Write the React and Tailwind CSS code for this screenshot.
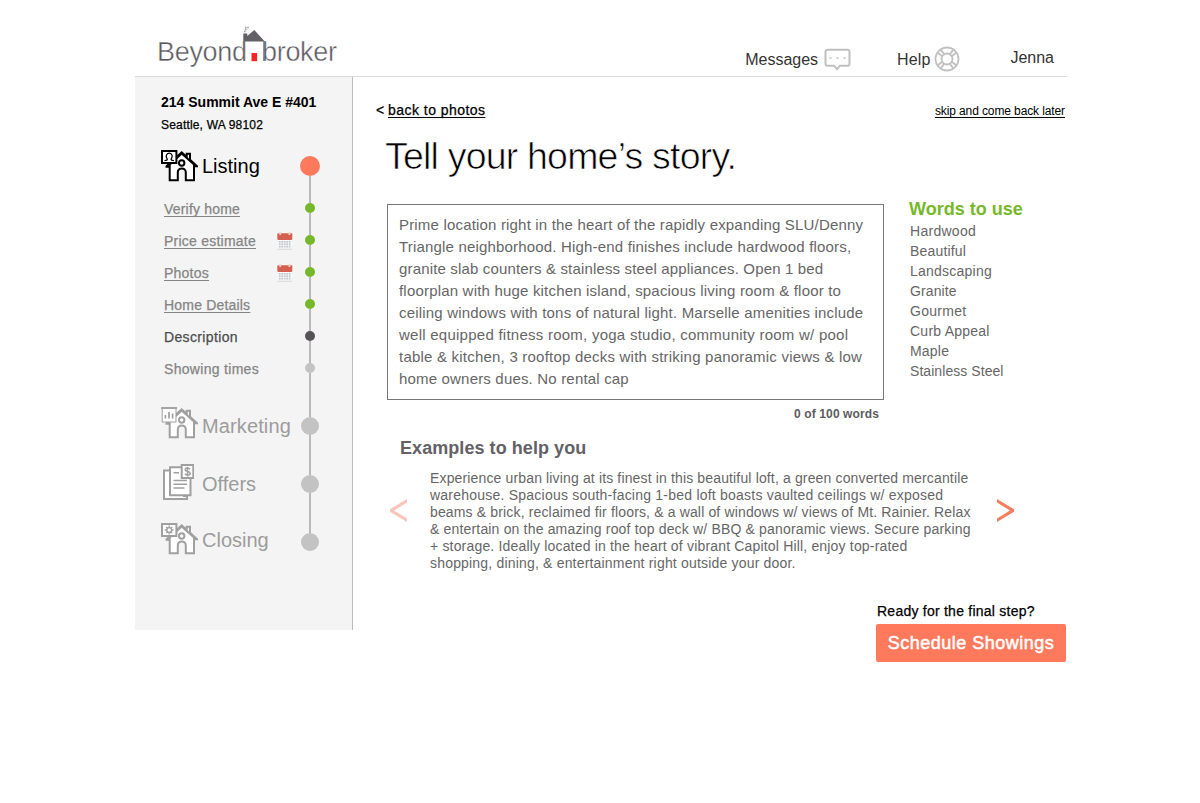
function House({ children, stroke, width }) {
  return (
    <svg width="37" height="32" viewBox="0 0 37 32" fill="none" stroke={stroke} strokeWidth={width} className="shrink-0">
      <path d="M8.700 30.200V14.500L20.700 3.400 33 14.500v15.700h-8.200v-7.800a4 4 0 0 0-8 0v7.800z" fill="#fff" />
      <path d="M4.500 16.700h3.500M5.500 16.300 20.700 2.300l5 4.600V3.800h3.300v6L36 16.300h-3" fill="none" />
      <circle cx="20.700" cy="13" r="2.700" fill="#fff" />
      {children}
    </svg>
  );
}

function ListingIcon() {
  return (
    <House stroke="#000" width="2">
      <rect x="1" y="1" width="14.400" height="12" fill="#fff" />
      <path d="M3.500 10.600c2.600 0 3.200-.8 2.600-1.800C4.500 7 5 3.200 8.200 3.200s3.700 3.800 2.100 5.600c-.6 1 0 1.800 2.600 1.800" strokeWidth="1.300" />
    </House>
  );
}

function MarketingIcon() {
  return (
    <House stroke="#a0a0a0" width="2">
      <rect x="1.200" y="1" width="13.800" height="14" fill="#fff" strokeWidth="1" />
      <path d="M0 1h16" strokeWidth="1.800" />
      <path d="M4.400 11.500V8M8 11.500V5M11.600 11.500V6.500" strokeWidth="1.700" />
    </House>
  );
}

function ClosingIcon() {
  return (
    <House stroke="#a0a0a0" width="2">
      <rect x="1" y="1" width="14.400" height="12" fill="#fff" />
      <circle cx="8.200" cy="7" r="2.400" strokeWidth="1.400" />
      <path d="M8.200 2.600v2M8.200 9.400v2M3.800 7h2M10.600 7h2M5.100 3.900l1.400 1.400M9.900 8.700l1.400 1.400M11.300 3.900 9.900 5.300M6.500 8.700l-1.400 1.400" strokeWidth="1.300" />
    </House>
  );
}

function OffersIcon() {
  return (
    <svg width="33" height="36" viewBox="-2 0 33 36" fill="none" stroke="#a0a0a0" strokeWidth="2" className="shrink-0">
      <path d="M1 6.500h20v25.500h3v3H1z" fill="#fff" />
      <path d="M7 3.200h20.500v28H7z" fill="#fff" />
      <rect x="18.700" y="1" width="11.600" height="13" fill="#fff" />
      <path d="M10.500 8.700h5.500M10.500 16.500h13.500M10.500 20.300h13.500M10.500 24h11" strokeWidth="1.500" />
      <path d="M27 5.300c-.6-1-1.500-1.300-2.500-1.300-1.300 0-2.300.7-2.300 1.700 0 2.500 5 1.200 5 3.700 0 1-1.100 1.700-2.500 1.700-1.200 0-2.200-.5-2.700-1.500M24.500 2.800v9.600" strokeWidth="1.500" />
    </svg>
  );
}

const dotCols = [2.6, 5.1, 7.6, 10.1, 12.6];
const dotRows = [9.6, 12, 14.4];

function Calendar() {
  return (
    <svg width="16" height="18" viewBox="0 0 16 18">
      <rect x=".5" y="8" width="14.500" height="9" fill="#fafafa" />
      <path d="M.5 17.200h14.500" stroke="#c9cdd0" strokeWidth=".8" />
      <rect x=".3" y="1.300" width="15" height="6.600" rx=".8" fill="#d4614f" />
      <path d="M3.200 0v3M12.400 0v3" stroke="#eed3ce" strokeWidth="1.800" />
      {dotRows.map((y) => dotCols.map((x) => <rect key={x + "-" + y} x={x - 0.8} y={y - 0.6} width="1.800" height="1.700" fill="#c0c7cd" />))}
    </svg>
  );
}

function Logo() {
  return (
    <div className="flex h-[34px] text-[27px] leading-[34px] text-[#5c5a5f] [-webkit-text-stroke:0.400px_white]">
      <span className="w-[85px] tracking-[-0.320px] whitespace-nowrap">Beyond</span>
      <svg width="24" height="36" viewBox="0 0 24 36" className="z-10 -mt-[9px] -mr-[4px] shrink-0">
        <path d="M1.300 15.500V7.500h4v2.600L12.300 4l10.500 11.500z" fill="#636166" />
        <path d="M2.300 15v20M22 15v20" stroke="#77757a" strokeWidth="1.500" />
        <path d="M2 5.500h2.500M3 3.500h2.500M3 1.500h4" stroke="#999" strokeWidth="1.300" strokeDasharray="1.500 .8" />
        <rect x="9.500" y="27" width="5.600" height="8.200" fill="#fb2323" />
      </svg>
      <span className="tracking-[-0.300px] whitespace-nowrap">broker</span>
    </div>
  );
}

const steps = [
  { label: "Verify home", link: true, track: "tracking-[0.190px]" },
  { label: "Price estimate", link: true, cal: true, track: "tracking-[0.235px]" },
  { label: "Photos", link: true, cal: true, track: "tracking-[0.234px]" },
  { label: "Home Details", link: true, track: "tracking-[0.190px]" },
  { label: "Description", current: true, track: "tracking-[0.361px]" },
  { label: "Showing times", track: "tracking-[0.304px]" },
];

function Step({ label, link, cal, current, track }) {
  return (
    <li className="flex h-8 items-center justify-between pr-[7px] pl-[3px] text-[14px] leading-8 whitespace-nowrap [-webkit-text-stroke:0.25px]">
      {link ? (
        <a className={"text-[#858585] underline decoration-1 underline-offset-2 [text-decoration-skip-ink:none] " + track}>{label}</a>
      ) : (
        <span className={(current ? "text-[#4d4d4d] " : "text-[#858585] ") + track}>{label}</span>
      )}
      {cal && <Calendar />}
    </li>
  );
}

const dots = ["bg-[#76b82a]", "bg-[#76b82a]", "bg-[#76b82a]", "bg-[#76b82a]", "bg-[#555355]", "bg-[#c3c3c3]"];

function Rail() {
  return (
    <div className="flex w-5 flex-col items-center pt-[6px]">
      <i className="size-5 rounded-full bg-[#ff7a5c]" />
      <i className="h-[27px] w-[2px] bg-[#b9b9b9]" />
      {dots.map((c, i) => (
        <div key={i} className="flex flex-col items-center">
          <i className={"size-[10px] rounded-full " + c} />
          <i className={i === 5 ? "h-[44px] w-[2px] bg-[#b9b9b9]" : "h-[22px] w-[2px] bg-[#b9b9b9]"} />
        </div>
      ))}
      <i className="size-[18px] rounded-full bg-[#c3c3c3]" />
      <i className="h-10 w-[2px] bg-[#b9b9b9]" />
      <i className="size-[18px] rounded-full bg-[#c3c3c3]" />
      <i className="h-10 w-[2px] bg-[#b9b9b9]" />
      <i className="size-[18px] rounded-full bg-[#c3c3c3]" />
    </div>
  );
}

function Sidebar() {
  return (
    <aside className="h-[553px] w-[218px] shrink-0 border-r border-[#bdbdbd] bg-[#f4f4f4] pt-[15px] pl-[26px]">
      <h2 className="text-[14px] leading-5 font-bold whitespace-nowrap">214 Summit Ave E #401</h2>
      <p className="mt-[5px] text-[12px] leading-4 tracking-[0.180px] [-webkit-text-stroke:0.25px]">Seattle, WA 98102</p>
      <div className="mt-[17px] flex">
        <nav className="w-[139px] text-[20px] leading-6 text-[#9c9c9c]">
          <div className="flex h-[31px] gap-1 text-black"><ListingIcon /><span className="mt-1">Listing</span></div>
          <ul className="mt-3">{steps.map((s) => <Step key={s.label} {...s} />)}</ul>
          <div className="mt-[22px] flex h-[31px] gap-1"><MarketingIcon /><span className="mt-[7px] tracking-[0.120px]">Marketing</span></div>
          <div className="mt-[26px] flex h-[36px] gap-2"><OffersIcon /><span className="mt-2">Offers</span></div>
          <div className="mt-[23px] flex h-[31px] gap-1"><ClosingIcon /><span className="mt-[5px]">Closing</span></div>
        </nav>
        <Rail />
      </div>
    </aside>
  );
}

const story = [
  ["Prime location right in the heart of the rapidly expanding SLU/Denny", "tracking-[0.180px]"],
  ["Triangle neighborhood. High-end finishes include hardwood floors,", "tracking-[0.180px]"],
  ["granite slab counters & stainless steel appliances. Open 1 bed", "tracking-[0.160px]"],
  ["floorplan with huge kitchen island, spacious living room & floor to", "tracking-[0.190px]"],
  ["ceiling windows with tons of natural light. Marselle amenities include", "tracking-[0.190px]"],
  ["well equipped fitness room, yoga studio, community room w/ pool", "tracking-[0.250px]"],
  ["table & kitchen, 3 rooftop decks with striking panoramic views & low", "tracking-[0.215px]"],
  ["home owners dues. No rental cap", "tracking-[0.180px]"],
];

const example = [
  ["Experience urban living at its finest in this beautiful loft, a green converted mercantile", "tracking-[0.145px]"],
  ["warehouse. Spacious south-facing 1-bed loft boasts vaulted ceilings w/ exposed", "tracking-[0.225px]"],
  ["beams & brick, reclaimed fir floors, & a wall of windows w/ views of Mt. Rainier. Relax", "tracking-[0.150px]"],
  ["& entertain on the amazing roof top deck w/ BBQ & panoramic views. Secure parking", "tracking-[0.170px]"],
  ["+ storage. Ideally located in the heart of vibrant Capitol Hill, enjoy top-rated", "tracking-[0.175px]"],
  ["shopping, dining, & entertainment right outside your door.", "tracking-[0.185px]"],
];

const words = [
  ["Hardwood", "tracking-[0.280px]"],
  ["Beautiful", "tracking-[0.180px]"],
  ["Landscaping", "tracking-[0.230px]"],
  ["Granite", "tracking-[0.100px]"],
  ["Gourmet", "tracking-[0.280px]"],
  ["Curb Appeal", "tracking-[0.240px]"],
  ["Maple", "tracking-[0.200px]"],
  ["Stainless Steel", "tracking-[0.060px]"],
];

function Chevron({ className, flip }) {
  return (
    <svg width="17" height="23" viewBox="0 0 17 23" className={className}>
      <path d={flip ? "M17 0 0 10.200v2.600L17 23v-3.600L4 11.500 17 3.600z" : "M0 0 17 10.200v2.600L0 23v-3.600L13 11.500 0 3.600z"} fill="currentColor" />
    </svg>
  );
}

export default function App() {
  return (
    <div className="min-h-[803px] bg-white font-['Liberation_Sans',Arial,sans-serif] text-black">
      <div className="ml-[135px] w-[932px]">
        <header className="flex h-[77px] border-b border-[#dcdcdc] text-[16px] leading-5 text-[#333]">
          <div className="ml-[22px] pt-[35px]"><Logo /></div>
          <div className="ml-auto flex items-start pr-[13px]">
            <a className="mt-[50px] flex">Messages
              <svg width="27" height="24" viewBox="0 0 27 24" className="-mt-[3px] ml-[6px]" fill="none" stroke="#c0c0c0" strokeWidth="2">
                <path d="M3.500 2.700h20a2 2 0 0 1 2 2v12a2 2 0 0 1-2 2h-7.500l-3 3.500-3-3.500H3.500a2 2 0 0 1-2-2v-12a2 2 0 0 1 2-2z" />
                <path d="M5.500 11h2M12.500 11h2M19.500 11h2" strokeWidth="1.600" />
              </svg>
            </a>
            <a className="mt-[50px] ml-[46px] flex"><span className="tracking-[0.100px]">Help</span>
              <svg width="26" height="26" viewBox="0 0 26 26" className="-mt-[4px] ml-[4px]" fill="none" stroke="#c0c0c0" strokeWidth="1.800">
                <circle cx="13" cy="13" r="11.500" />
                <circle cx="13" cy="13" r="5.500" />
                <path d="M7.800 10 3.900 6.700M10 7.800 6.700 3.900M18.200 10l3.900-3.300M16 7.800l3.300-3.900M7.800 16l-3.900 3.300M10 18.200l-3.300 3.900M18.200 16l3.900 3.300M16 18.200l3.300 3.900" />
              </svg>
            </a>
            <a className="mt-[48px] ml-[50px]">Jenna</a>
          </div>
        </header>
        <div className="flex">
          <Sidebar />
          <main className="w-[714px] pt-[23px]">
            <div className="flex justify-between pr-[2px] pl-[23px] leading-5">
              <span className="text-[14px] [-webkit-text-stroke:0.25px]">&lt; <a className="tracking-[0.450px] underline underline-offset-2 [text-decoration-skip-ink:none]">back to photos</a></span>
              <a className="pt-px text-[12px] tracking-[-0.110px] underline underline-offset-2 [text-decoration-skip-ink:none]">skip and come back later</a>
            </div>
            <h1 className="mt-[13px] pl-[32px] text-[37.5px] leading-[44px] tracking-[-0.800px] [-webkit-text-stroke:0.700px_white]">Tell your home’s story.</h1>
            <div className="mt-[21px] flex pl-[34px]">
              <div className="mt-[5px] w-[497px]">
                <div className="h-[196px] border border-[#777] pt-[9px] pl-[11px] text-[15px] leading-[22px] text-[#666]">
                  {story.map(([t, c]) => <p key={t} className={"whitespace-nowrap " + c}>{t}</p>)}
                </div>
                <p className="mt-[6px] pr-[5px] text-right text-[12px] leading-4 font-bold tracking-[0.110px] text-[#5c5c5c]">0 of 100 words</p>
              </div>
              <div className="ml-[25px] text-[14px] leading-5 text-[#666]">
                <h3 className="text-[18px] font-bold text-[#76b82a]">Words to use</h3>
                <ul className="mt-[2px] pl-px">{words.map(([t, c]) => <li key={t} className={c}>{t}</li>)}</ul>
              </div>
            </div>
            <h3 className="mt-[14px] pl-[47px] text-[18px] leading-6 font-bold tracking-[0.060px] text-[#636166]">Examples to help you</h3>
            <div className="mt-[10px] flex items-start pl-[37px]">
              <Chevron flip className="mt-[29px] text-[#fbc4b8]" />
              <div className="ml-[23px] w-[567px] text-[14px] leading-[17px] text-[#666]">
                {example.map(([t, c]) => <p key={t} className={"whitespace-nowrap " + c}>{t}</p>)}
              </div>
              <Chevron className="mt-[29px] text-[#f87c5f]" />
            </div>
            <div className="mt-[29px] ml-[523px] w-[190px]">
              <p className="pl-px text-[14px] leading-5 tracking-[0.240px] whitespace-nowrap [-webkit-text-stroke:0.25px]">Ready for the final step?</p>
              <button className="mt-[3px] h-[38px] w-[190px] rounded-[2px] bg-[#ff7a5c] text-[18px] leading-[38px] tracking-[0.500px] whitespace-nowrap text-white [-webkit-text-stroke:0.500px]">Schedule Showings</button>
            </div>
          </main>
        </div>
      </div>
    </div>
  );
}
